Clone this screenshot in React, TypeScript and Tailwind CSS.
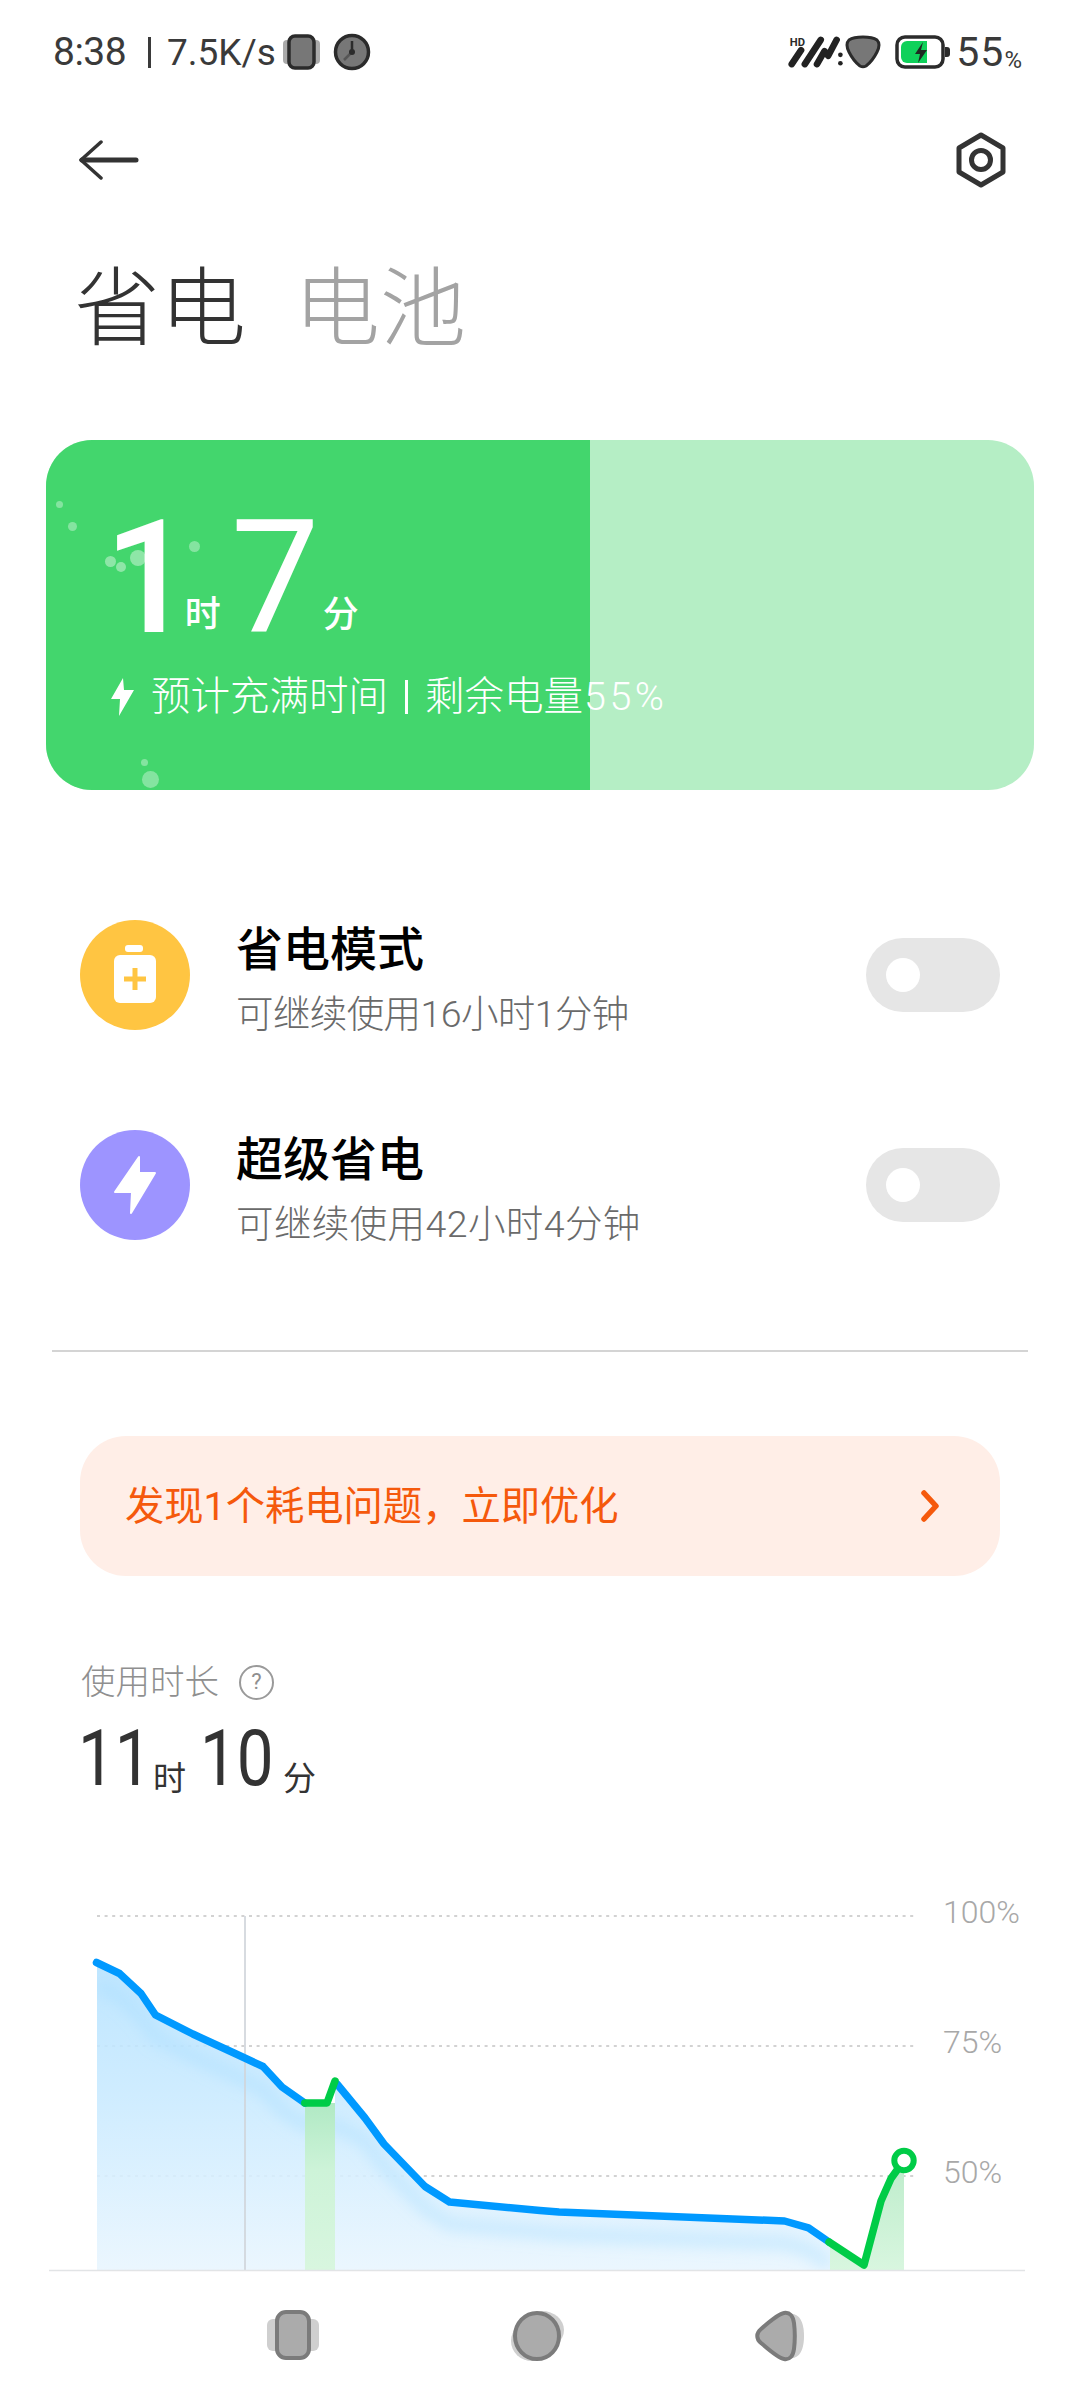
const sans = '"Roboto", "Noto Sans CJK SC", sans-serif';

const bubbles = [
  { x: 59, y: 504, r: 3.5, o: 0.35 },
  { x: 72, y: 526, r: 4.5, o: 0.35 },
  { x: 110, y: 561, r: 5.5, o: 0.4 },
  { x: 121, y: 567, r: 5, o: 0.4 },
  { x: 138, y: 558, r: 8, o: 0.4 },
  { x: 194, y: 546, r: 5.5, o: 0.35 },
  { x: 144, y: 762, r: 3.5, o: 0.35 },
  { x: 150, y: 779, r: 8.5, o: 0.35 },
];

const StatusBar = () => (
  <div className="h-[104px] flex items-center justify-between pl-[53px] pr-[58px] text-[#3a3a3a]">
    <div className="flex items-center">
      <span className="text-[39px] leading-none tracking-[-0.5px] w-[95px]">8:38</span>
      <span className="w-[3px] h-[31px] bg-[#3a3a3a]" />
      <span className="ml-[16px] text-[37px] leading-none w-[116px] whitespace-nowrap">7.5K/s</span>
      <svg width="40" height="36" viewBox="0 0 40 36">
        <rect x="0" y="6" width="37" height="24" rx="4" fill="#aaa" />
        <rect x="6" y="2" width="25" height="32" rx="6" fill="#777" stroke="#2b2b2b" strokeWidth="3.5" />
      </svg>
      <svg width="38" height="38" viewBox="0 0 38 38" className="ml-[10px]">
        <circle cx="19" cy="19" r="16.5" fill="#777" stroke="#2b2b2b" strokeWidth="3.5" />
        <path d="M19 8v11" stroke="#2b2b2b" strokeWidth="2.5" />
        <path d="M19 19l-8 8" stroke="#555" strokeWidth="2.5" />
        <circle cx="19" cy="19" r="3" fill="#2b2b2b" />
      </svg>
    </div>
    <div className="flex items-center">
      <svg width="58" height="36" viewBox="0 0 62 36">
        <text x="2" y="12" fontSize="12" fontWeight="700" fill="#2b2b2b" fontFamily="Roboto, sans-serif">HD</text>
        <path d="M4 31l10-15M18 31L35 5M31 31l8-14M43 22l9-17" stroke="#222" strokeWidth="7" strokeLinecap="round" />
        <circle cx="56" cy="21" r="2.5" fill="#222" />
        <circle cx="56" cy="30" r="2.5" fill="#222" />
      </svg>
      <svg width="38" height="36" viewBox="0 0 38 36" className="-ml-[2px]">
        <path d="M19 3c6 0 11 1 14 3 3 3 2 8 0 12-3 6-7 11-11 14-2 1-4 1-6 0-4-3-8-8-11-14-2-4-3-9 0-12 3-2 8-3 14-3z" fill="#777" stroke="#2b2b2b" strokeWidth="3" />
      </svg>
      <svg width="56" height="36" viewBox="0 0 56 36" className="ml-[13px]">
        <rect x="2" y="3" width="46" height="30" rx="8" fill="#fff" stroke="#2b2b2b" strokeWidth="3.5" />
        <path d="M6 13a6 6 0 0 1 6-6h20v22H12a6 6 0 0 1-6-6z" fill="#0fd15a" />
        <path d="M50 13h2a3 3 0 0 1 3 3v4a3 3 0 0 1-3 3h-2z" fill="#2b2b2b" />
        <path d="M28 8l-8 12h5l-2 9 9-13h-6z" fill="#1f2a22" />
      </svg>
      <span className="ml-[5px] text-[41px] leading-none tracking-[1px]">55</span>
      <span className="text-[24px] leading-none self-end mb-[1px]">%</span>
    </div>
  </div>
);

const Header = () => (
  <div className="h-[112px] flex items-center justify-between pl-[79px] pr-[73px]">
    <svg width="60" height="40" viewBox="0 0 60 40" fill="none" stroke="#333" strokeLinecap="round" strokeLinejoin="round">
      <path d="M22 2L2 20l20 18" strokeWidth="3.5" />
      <path d="M3 20h54" strokeWidth="5" />
    </svg>
    <svg width="52" height="56" viewBox="0 0 52 56" fill="none" stroke="#333" strokeWidth="5" strokeLinejoin="round">
      <path d="M26 3l22 13v24L26 53 4 40V16z" />
      <circle cx="26" cy="28" r="9.5" />
    </svg>
  </div>
);

const BatteryCard = () => (
  <div className="relative mx-[46px] mt-[85px] h-[350px] rounded-[46px] overflow-hidden bg-[#b5eec5]">
    <div className="absolute inset-y-0 left-0 w-[544px] bg-[#43d66d]" />
    {bubbles.map((b, i) => (
      <span
        key={i}
        className="absolute rounded-full bg-white"
        style={{ left: b.x - b.r - 46, top: b.y - b.r - 440, width: b.r * 2, height: b.r * 2, opacity: b.o }}
      />
    ))}
    <div className="relative pl-[58px] pt-[63px] text-white">
      <div className="flex items-end h-[150px]">
        <span className="text-[158px] leading-[150px] font-medium tracking-[-9px]">1</span>
        <span className="text-[36px] leading-[40px] mb-[18px] w-[46px] font-medium">时</span>
        <span className="text-[158px] leading-[150px] w-[92px]">7</span>
        <span className="text-[36px] leading-[40px] mb-[18px] font-medium">分</span>
      </div>
      <div className="flex items-center mt-[22px] h-[44px]">
        <svg width="26" height="40" viewBox="0 0 26 40" className="shrink-0 ml-[6px]">
          <path d="M13 1L1 22h9l-1 17 15-26H14z" fill="#fff" />
        </svg>
        <span className="ml-[15px] text-[39.5px] leading-none whitespace-nowrap font-light flex items-center">
          预计充满时间
          <span className="mx-[17px] w-[3px] h-[34px] bg-white" />
          剩余电量
          <span className="tracking-[3.5px] ml-[1px]">55%</span>
        </span>
      </div>
    </div>
  </div>
);

const Toggle = () => (
  <div className="w-[134px] h-[74px] rounded-full bg-[#e6e6e6] flex items-center pl-[20px]">
    <span className="w-[34px] h-[34px] rounded-full bg-white" />
  </div>
);

const ModeRow = ({ title, sub, subClass, icon }: { title: string; sub: string; subClass: string; icon: React.ReactNode }) => (
  <div className="h-[110px] flex items-center pl-[80px] pr-[80px]">
    {icon}
    <div className="ml-[46px] flex-1 self-start">
      <div className="mt-[5px] text-[47px] leading-[50px] font-medium text-black">{title}</div>
      <div className={`mt-[14px] text-[37.5px] leading-[50px] font-light text-[#6a6a6a] ${subClass}`}>{sub}</div>
    </div>
    <Toggle />
  </div>
);

const BatteryIcon = () => (
  <div className="w-[110px] h-[110px] rounded-full bg-[#ffc542] flex items-center justify-center shrink-0">
    <svg width="44" height="60" viewBox="0 0 44 60">
      <rect x="12" y="0" width="18" height="7" rx="3" fill="#fff" />
      <rect x="1" y="10" width="42" height="48" rx="6" fill="#fff" />
      <path d="M22 23v22M11 34h22" stroke="#ffc542" strokeWidth="5" />
    </svg>
  </div>
);

const BoltIcon = () => (
  <div className="w-[110px] h-[110px] rounded-full bg-[#9d94ff] flex items-center justify-center shrink-0">
    <svg width="44" height="60" viewBox="0 0 44 60">
      <path d="M26 2L2 37h17l-1 21 24-40H26z" fill="#fff" stroke="#fff" strokeWidth="2" strokeLinejoin="round" />
    </svg>
  </div>
);

const UsageChart = () => (
  <div className="relative mt-[106px] h-[372px]">
    <svg width="1080" height="372" viewBox="0 1900 1080 372" className="block" fill="none">
      <defs>
        <linearGradient id="areaBlue" gradientUnits="userSpaceOnUse" x1="0" y1="1960" x2="0" y2="2270">
          <stop offset="0" stopColor="#b5e2ff" />
          <stop offset="0.45" stopColor="#c9eaff" />
          <stop offset="1" stopColor="#e8f5fe" />
        </linearGradient>
        <linearGradient id="areaGreen" gradientUnits="userSpaceOnUse" x1="0" y1="2103" x2="0" y2="2270">
          <stop offset="0" stopColor="#b0e9c4" />
          <stop offset="0.4" stopColor="#cdf3d8" />
          <stop offset="1" stopColor="#d8f6df" />
        </linearGradient>
        <linearGradient id="areaGreenEnd" gradientUnits="userSpaceOnUse" x1="0" y1="2160" x2="0" y2="2270">
          <stop offset="0" stopColor="#bdeccb" />
          <stop offset="1" stopColor="#d8f6df" />
        </linearGradient>
        <clipPath id="areaClip">
          <path d="M97 1962.5L119.5 1973.5 141 1993.5 155.5 2015 192.8 2034 234 2053 263 2066.5 282 2087 304.8 2103 335 2103 335 2081 365 2118 384 2144 425 2186.5 449.5 2202 540 2210.5 559 2212 784.5 2221 808.5 2227.8 830 2243 830 2270 97 2270z" />
        </clipPath>
        <filter id="lineBlur" x="-10%" y="-30%" width="120%" height="160%">
          <feGaussianBlur stdDeviation="7" />
        </filter>
      </defs>

      {/* grid */}
      {[1916, 2046, 2176].map((y) => (
        <path key={y} d={`M97 ${y}H914`} stroke="#d2d2d2" strokeWidth="2" strokeDasharray="3 4.6" />
      ))}

      {/* area under the line */}
      <path
        d="M97 1962.5L119.5 1973.5 141 1993.5 155.5 2015 192.8 2034 234 2053 263 2066.5 282 2087 304.8 2103 335 2103 335 2081 365 2118 384 2144 425 2186.5 449.5 2202 540 2210.5 559 2212 784.5 2221 808.5 2227.8 830 2243 830 2270 97 2270z"
        fill="url(#areaBlue)"
        fillOpacity="0.88"
      />
      <g clipPath="url(#areaClip)">
        <path
          d="M97 1985L119.5 1996 141 2016 155.5 2037 192.8 2056 234 2075 263 2089 282 2110 304.8 2125 335 2125 365 2140 384 2166 425 2208 449.5 2224 540 2232 559 2234 784.5 2243 808.5 2250 830 2265"
          stroke="#a6dcff"
          strokeWidth="14"
          strokeOpacity="0.4"
          filter="url(#lineBlur)"
        />
      </g>
      <rect x="305" y="2103" width="30" height="167" fill="url(#areaGreen)" />
      <path d="M830 2243L864 2265 881 2201 891 2178.5 904 2160.5V2270H830z" fill="url(#areaGreenEnd)" />

      {/* cursor and baseline */}
      <path d="M245 1916V2270" stroke="#d0d5da" strokeOpacity="0.85" strokeWidth="2" />
      <path d="M49 2270.5H1025" stroke="#e2e4e6" strokeWidth="1.5" />

      {/* curve */}
      <g strokeWidth="7.5" strokeLinecap="round" strokeLinejoin="round">
        <path d="M96.5 1962.5L119.5 1973.5 141 1993.5 155.5 2015 192.8 2034 234 2053 263 2066.5 282 2087 304.8 2103" stroke="#0099ff" />
        <path d="M337 2084L365 2118 384 2144 425 2186.5 449.5 2202 540 2210.5 559 2212 784.5 2221 808.5 2227.8 829 2242" stroke="#0099ff" />
        <path d="M304.8 2103H327L335 2081" stroke="#00cc47" />
        <path d="M829 2242L864 2265 881 2201 891 2178.5 900 2166" stroke="#00cc47" />
      </g>
      <circle cx="904" cy="2160.5" r="9.7" fill="#fff" stroke="#00cc47" strokeWidth="6" />
    </svg>
    {[
      { label: '100%', top: 0 },
      { label: '75%', top: 130 },
      { label: '50%', top: 260 },
    ].map((l) => (
      <span
        key={l.label}
        className="absolute left-[943px] text-[32px] leading-[24px] font-light text-[#a8a8a8]"
        style={{ top: l.top }}
      >
        {l.label}
      </span>
    ))}
  </div>
);

const NavBar = () => (
  <div className="flex items-center pl-[263px] gap-[184px] h-[128px]">
    <svg width="60" height="54" viewBox="0 0 60 54">
      <rect x="4" y="10" width="52" height="32" rx="6" fill="#cfcfcf" />
      <rect x="14" y="3" width="32" height="46" rx="9" fill="#ababab" stroke="#7b7b7b" strokeWidth="4" />
    </svg>
    <svg width="60" height="54" viewBox="0 0 60 54">
      <ellipse cx="35" cy="21" rx="22" ry="19" fill="#cfcfcf" />
      <ellipse cx="25" cy="32" rx="21" ry="20" fill="#cfcfcf" />
      <ellipse cx="30" cy="27" rx="22" ry="23" fill="#ababab" stroke="#7b7b7b" strokeWidth="4" />
    </svg>
    <svg width="60" height="54" viewBox="0 0 60 54">
      <path d="M14 20c8-8 20-15 27-15 6 0 12 6 12 22s-6 22-12 22c-7 0-19-7-27-15-4-5-4-9 0-14z" fill="#cfcfcf" />
      <path d="M10 20c8-7 17-15 23-16 6-1 9 3 10 10 1 8 1 18 0 26-1 7-4 11-10 10-6-1-15-9-23-16-5-4-5-10 0-14z" fill="#ababab" stroke="#7b7b7b" strokeWidth="4" />
    </svg>
  </div>
);

export default function App() {
  return (
    <div className="w-[1080px] h-[2400px] overflow-hidden bg-white flex flex-col" style={{ fontFamily: sans }}>
      <StatusBar />
      <Header />

      {/* Tabs */}
      <div className="mt-[49px] pl-[74px] h-[90px] flex items-center text-[86px] leading-[90px] font-light">
        <span className="text-[#333]">省电</span>
        <span className="ml-[48px] text-[#a3a3a3]">电池</span>
      </div>

      <BatteryCard />

      <div className="mt-[130px] flex flex-col gap-[100px]">
        <ModeRow title="省电模式" sub="可继续使用16小时1分钟" subClass="tracking-[-0.6px]" icon={<BatteryIcon />} />
        <ModeRow title="超级省电" sub="可继续使用42小时4分钟" subClass="tracking-[0.4px]" icon={<BoltIcon />} />
      </div>

      <div className="mt-[110px] mx-[52px] h-[2px] bg-[#d4d4d4]" />

      {/* Optimise banner */}
      <div className="mt-[84px] mx-[80px] h-[140px] rounded-[46px] bg-[#ffeee7] flex items-center justify-between pl-[45px] pr-[59px]">
        <span className="text-[39.3px] leading-none text-[#f5590c] pt-[3px]">发现1个耗电问题，立即优化</span>
        <svg width="22" height="32" viewBox="0 0 22 32" fill="none" stroke="#f5590c" strokeWidth="5.5" strokeLinecap="round" strokeLinejoin="round">
          <path d="M5 3l12 13L5 29" />
        </svg>
      </div>

      {/* Usage */}
      <div className="mt-[86px] pl-[81px] flex items-center h-[40px]">
        <span className="text-[34.5px] leading-none font-light text-[#8f8f8f]">使用时长</span>
        <span className="ml-[20px] w-[35px] h-[35px] rounded-full border-2 border-[#9a9a9a] flex items-center justify-center text-[22px] leading-none text-[#8f8f8f]">?</span>
      </div>
      <div className="mt-[22px] pl-[78px] flex items-end h-[70px] text-[#333]">
        <span className="text-[78px] leading-[70px] w-[75px] inline-block origin-left scale-x-[0.84]">11</span>
        <span className="text-[33px] leading-[36px] w-[47px] -mb-[3px]">时</span>
        <span className="text-[78px] leading-[70px] w-[83px] inline-block origin-left scale-x-[0.84]">10</span>
        <span className="text-[33px] leading-[36px] -mb-[3px]">分</span>
      </div>

      <UsageChart />
      <NavBar />
    </div>
  );
}
